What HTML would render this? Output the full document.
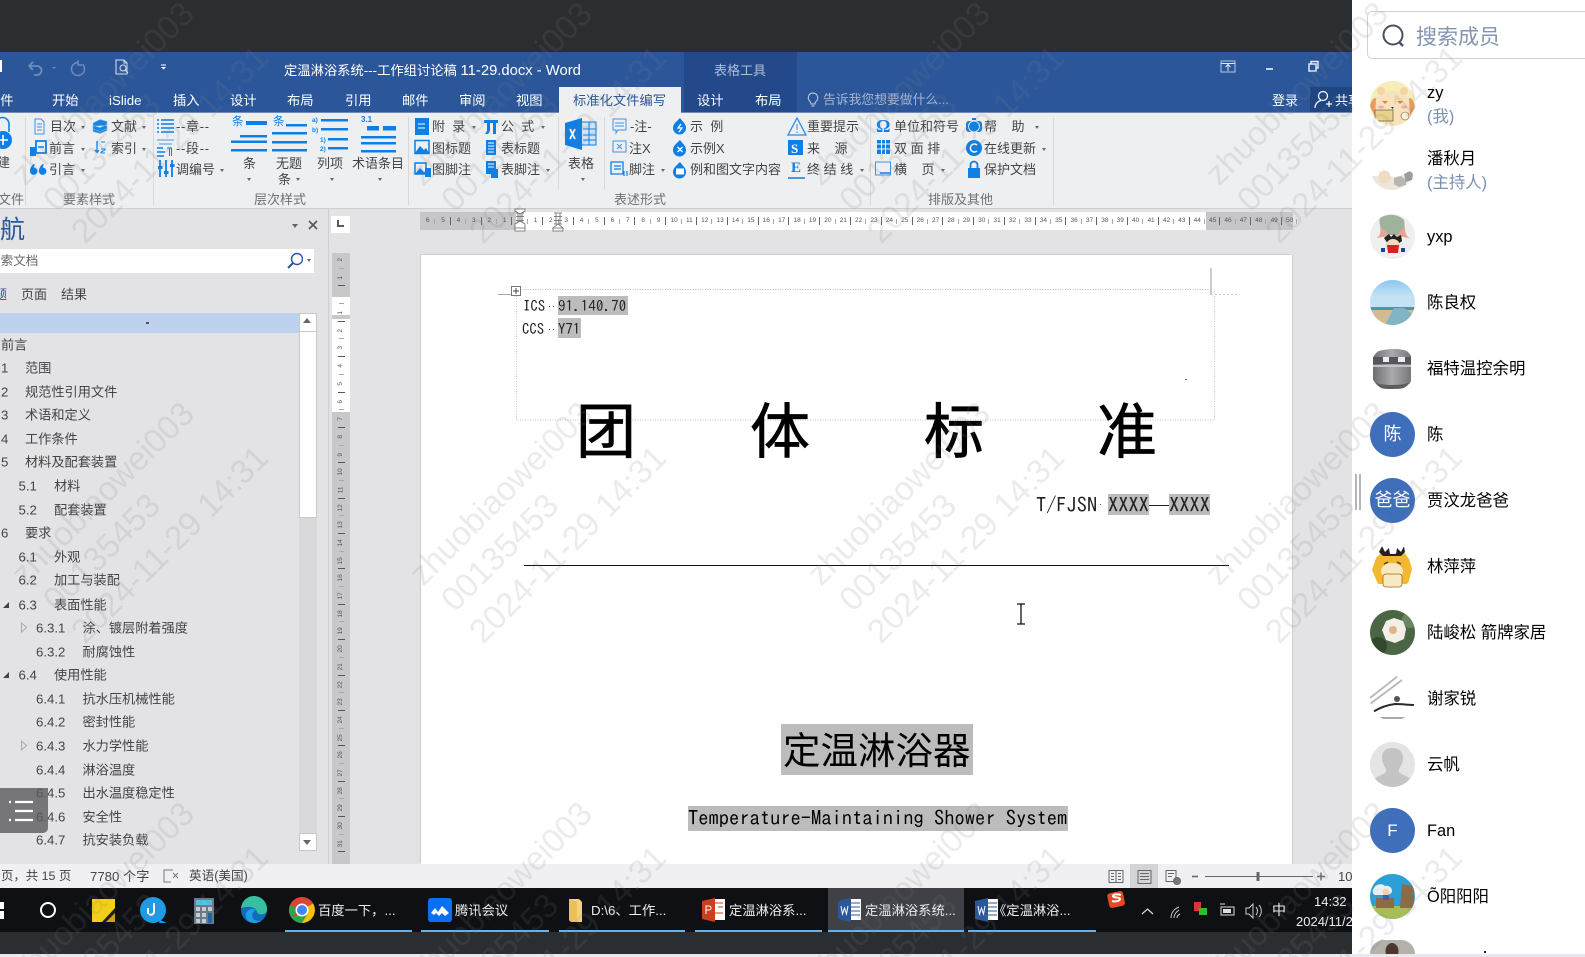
<!DOCTYPE html>
<html lang="zh"><head><meta charset="utf-8"><title>Word</title>
<style>
html,body{margin:0;padding:0;width:1585px;height:957px;overflow:hidden;background:#2b2e31}
body{position:relative;font-family:"Liberation Sans","Noto Sans CJK SC",sans-serif;font-size:13px;color:#444}
.a{position:absolute}
.t{position:absolute;white-space:nowrap;line-height:1}
.m{font-family:"IPAGothic","Liberation Mono",monospace;color:#222}
.w{color:#fff}
.r1{top:119.5px}.r2{top:141.5px}.r3{top:162.5px}
.g{top:192.5px;color:#707070}
.ar{position:absolute;width:0;height:0;border:2.5px solid transparent;border-top:3px solid #666;border-bottom:0}
.n{position:absolute;white-space:nowrap;line-height:1;color:#444;font-size:13.2px;transform:translateY(.5px)}
.sep{position:absolute;top:117px;height:88px;width:1px;background:#d8d8da}
.name{position:absolute;left:1427px;white-space:nowrap;line-height:1;font-size:16.4px;color:#000;margin-top:1px}
.sub{position:absolute;left:1427px;white-space:nowrap;line-height:1;font-size:16.4px;color:#7b8fb3;margin-top:1px}
.av{position:absolute;left:1370px;width:45px;height:45px;border-radius:50%;overflow:hidden}
.blue{background:#3f6fba;color:#fff;text-align:center;line-height:45px;font-size:18px}
.hr{display:flex;position:absolute;left:420px;top:212px;height:18px;font-size:6.5px;line-height:18px;color:#555}
.hr i{font-style:normal;display:block;width:15.4px;text-align:center;background:linear-gradient(#666,#666) right center/1px 8px no-repeat}
.hr i:nth-child(odd){background:linear-gradient(#aaa,#aaa) right center/1px 5px no-repeat}
.vr{position:absolute;left:332px;top:251px;width:18px;font-size:6.5px;color:#555}
.vr i{font-style:normal;display:block;height:17.7px;line-height:17.7px;text-align:center;background:linear-gradient(#555,#555) center bottom/7px 1px no-repeat}
.vr i:nth-child(odd){background:linear-gradient(#aaa,#aaa) center bottom/5px 1px no-repeat}
.vr b{display:inline-block;font-weight:400;transform:rotate(-90deg)}
.tab{position:absolute;top:93.5px;white-space:nowrap;line-height:1;color:#fff;font-size:13.3px}
.tk{position:absolute;top:904px;white-space:nowrap;line-height:1;color:#eee;font-size:13.3px}
.ul{position:absolute;top:930px;height:2px;background:#6cb0e8}
.big{position:absolute;white-space:nowrap;line-height:1;top:403px;font-size:60px;color:#000;font-weight:400;-webkit-text-stroke:.7px #000}
</style></head><body>

<!-- top / bottom dark -->
<div class="a" style="left:0;top:0;width:1352px;height:52px;background:#2b2e31"></div>
<div class="a" style="left:0;top:932px;width:1352px;height:22px;background:#2b2e31"></div>
<div class="a" style="left:0;top:954px;width:1585px;height:3px;background:#e8e8ee"></div>

<!-- title + tabs -->
<div class="a" style="left:0;top:52px;width:1352px;height:61px;background:#2b579a"></div>
<div class="a" style="left:684px;top:52px;width:113px;height:61px;background:#24498a"></div>
<div class="a" style="left:1310px;top:87px;width:42px;height:26px;background:#1f4681"></div>
<div class="a" style="left:0;top:112px;width:1352px;height:1px;background:#6d8cba"></div>

<svg class="a" style="left:0;top:52px" width="200" height="34" viewBox="0 52 200 34" fill="none">
<rect x="0" y="60" width="2" height="12" fill="#fff"/>
<path d="M29 66h8a4.500 4.500 0 0 1 0 9h-3M29 66l4-4M29 66l4 4" stroke="#6f8cba" stroke-width="1.800"/>
<path d="M52 67l2 2 2-2z" fill="#6f8cba"/>
<path d="M78 62.500a6.500 6.500 0 1 0 4.500 1.800M78 60v5h4" stroke="#6f8cba" stroke-width="1.500"/>
<path d="M116 60h8l3 3v11h-11zM124 60v3h3" stroke="#d9e2f0" stroke-width="1"/><circle cx="123" cy="68" r="3" stroke="#d9e2f0"/><path d="M125 70l3 3" stroke="#d9e2f0"/>
<path d="M161 67h5l-2.500 2.500z" fill="#fff"/><path d="M161 65h5" stroke="#fff"/>
</svg>

<div class="t w" style="left:284px;top:63.500px;font-size:13.3px">定温淋浴系统---工作组讨论稿 <span style="font-size:14.800px">11-29.docx - Word</span></div>
<div class="t" style="left:714px;top:63.500px;font-size:13px;color:#aebdd8">表格工具</div>

<div class="tab" style="left:-13px">文件</div>
<div class="tab" style="left:52px">开始</div>
<div class="tab" style="left:109px">iSlide</div>
<div class="tab" style="left:173px">插入</div>
<div class="tab" style="left:230px">设计</div>
<div class="tab" style="left:287px">布局</div>
<div class="tab" style="left:345px">引用</div>
<div class="tab" style="left:402px">邮件</div>
<div class="tab" style="left:459px">审阅</div>
<div class="tab" style="left:516px">视图</div>
<div class="a" style="left:559px;top:87px;width:122px;height:27px;background:#eeeff1"></div>
<div class="tab" style="left:573px;color:#2b579a">标准化文件编写</div>
<div class="tab" style="left:697px">设计</div>
<div class="tab" style="left:755px">布局</div>
<svg class="a" style="left:806px;top:92px" width="14" height="16" viewBox="0 0 14 16" fill="none" stroke="#c4d0e4"><path d="M7 1a4.800 4.800 0 0 0-3 8.500c.7.700 1 1.500 1 2.500h4c0-1 .3-1.800 1-2.500A4.800 4.800 0 0 0 7 1zM5.500 14h3"/></svg>
<div class="t" style="left:823px;top:94px;font-size:12.800px;color:#a4b5d2">告诉我您想要做什么...</div>
<div class="t w" style="left:1272px;top:94px;font-size:13px">登录</div>
<svg class="a" style="left:1314px;top:90px" width="20" height="20" viewBox="0 0 20 20" fill="none" stroke="#fff" stroke-width="1.200"><circle cx="9" cy="6" r="4.500"/><path d="M1 18c0-4 3-7 6-7.500M12 14h6M15 11v6"/></svg>
<div class="t w" style="left:1335px;top:93.500px;font-size:13px;width:17px;overflow:hidden">共享</div>

<svg class="a" style="left:1215px;top:58px" width="110" height="18" viewBox="0 0 110 18" fill="none" stroke="#e4eaf4">
<rect x="6" y="3" width="14" height="11" stroke="#b7c5dd"/><path d="M6 5.500h14M13 13V7M10.500 9L13 6.500 15.500 9"/>
<path d="M51 11h7" stroke="#fff" stroke-width="1.500"/>
<rect x="94" y="6" width="7" height="7" stroke-width="1.500"/><path d="M96 6V3.500h7V10h-2" stroke-width="1.500"/>
</svg>

<!-- ribbon -->
<div class="a" style="left:0;top:113px;width:1352px;height:95px;background:#eeeff1"></div>
<div class="a" style="left:0;top:208px;width:1352px;height:1px;background:#cfcfd2"></div>
<div class="sep" style="left:25px"></div><div class="sep" style="left:153px"></div>
<div class="sep" style="left:408px"></div><div class="sep" style="left:558px;height:72px"></div><div class="sep" style="left:604px;height:72px"></div>
<div class="sep" style="left:870px"></div><div class="sep" style="left:1053px"></div>

<svg class="a" style="left:0;top:113px" width="1352" height="95" viewBox="0 113 1352 95" fill="none" stroke="#0d7fe6" stroke-width="1">
<!-- new doc -->
<path d="M-4 132v-8a6 6 0 0 1 13 0v8" stroke-width="1.600"/><circle cx="3" cy="140" r="9" fill="#0d7fe6" stroke="none"/><path d="M3 135v10M-2 140H8" stroke="#fff" stroke-width="1.600"/>
<!-- 目次 -->
<path d="M35 119h6l3 3v12H35zM37 124h5M37 127h5M37 130h5" stroke="#3b96e6"/>
<!-- 文献 -->
<path d="M93 123l7-3.500 7 2v3l-7 3-7-2zM93 126v3l7 2.500 7-3v-3M93 129v2.500l7 2 7-3v-2.500" fill="#1c86dd" stroke="#7fb9ea" stroke-width=".6"/>
<!-- 前言 -->
<path d="M36 141h10v12H36z" stroke-width="1.800"/><rect x="30" y="147" width="6" height="9" fill="#0d7fe6" stroke="none"/><path d="M38 147h6" stroke-width="1.500"/>
<!-- 索引 -->
<path d="M97 141v11M95 150l2 2.500 2-2.500" stroke-width="1.300"/><path d="M101 142h4M101 149h4v1l-4 2v1h4" stroke-width="1"/>
<!-- 引言 -->
<path d="M33.500 164c-2 2-3.500 4-3.500 7a3.700 3.700 0 1 0 3.700-3.500c.2-1 .6-2 1.300-3zM42.500 164c-2 2-3.500 4-3.500 7a3.700 3.700 0 1 0 3.700-3.500c.2-1 .6-2 1.300-3z" fill="#0d7fe6" stroke="none"/>
<!-- 章 -->
<g stroke-width="1.500"><path d="M157 120h2M161 120h13M157 124h2M161 124h13M157 128h2M161 128h13M157 132h2M161 132h13"/>
<!-- 段 -->
<path d="M157 140h17M159 144h13" stroke="#7ab6ec"/><path d="M157 148h6M157 152h8M157 156h7"/><path d="M167 148h5M169.500 148v8M171.500 148v8" stroke-width="1"/>
<!-- 调编号 -->
<path d="M160 160v17M166 160v17M172 160v17" stroke-width="1.800"/></g>
<g fill="#0d7fe6" stroke="none"><rect x="158" y="166" width="4.500" height="3"/><rect x="164" y="171" width="4.500" height="3"/><rect x="170" y="164" width="4.500" height="3"/>
<!-- 条 -->
<rect x="246" y="121" width="21" height="4"/><rect x="240" y="135" width="27" height="2.500"/><rect x="231" y="140.500" width="36" height="2.500"/><rect x="231" y="149" width="36" height="2.500"/>
<!-- 无题条 -->
<rect x="286" y="124" width="21" height="2.500"/><rect x="272" y="132" width="35" height="2.500"/><rect x="272" y="141" width="35" height="2.500"/><rect x="272" y="149" width="35" height="2.500"/>
<!-- 列项 -->
<rect x="321" y="119" width="27" height="2.500"/><rect x="321" y="128" width="27" height="2.500"/><rect x="328" y="138" width="20" height="2.500"/><rect x="328" y="147" width="20" height="2.500"/>
<!-- 术语 -->
<rect x="367" y="126" width="12" height="4.500"/><rect x="383" y="126" width="13" height="4.500"/><rect x="361" y="136" width="35" height="2.500"/><rect x="361" y="142" width="35" height="2.500"/><rect x="361" y="150" width="35" height="2.500"/>
<!-- 附录 -->
<rect x="415" y="118" width="14" height="17"/>
<!-- pi -->
<path d="M484 120h14v3h-2v11h-3v-11h-3v8l-2 3h-3l2-3v-8h-3z"/>
<!-- 表标题 -->
<rect x="486" y="140" width="10" height="15"/>
<rect x="486" y="161" width="10" height="13"/><rect x="491" y="169" width="7" height="9"/>
</g>
<path d="M418 124h7M418 128h7M488 143h6M488 146h6M488 149h6M488 152h6M488 164h6M488 167h6" stroke="#fff" stroke-width="1"/>
<!-- 图标题 -->
<rect x="415" y="140.500" width="14" height="13" stroke-width="1.500"/><path d="M415 153l5-7 4 4 2-2 3 5z" fill="#0d7fe6" stroke="none"/>
<rect x="415" y="163" width="11" height="11" stroke-width="1.500"/><path d="M415 174l5-6 4 4 2-1v3z" fill="#0d7fe6" stroke="none"/><rect x="425" y="168" width="6" height="9" fill="#0d7fe6" stroke="none"/>
<!-- Excel -->
<rect x="575" y="122" width="21" height="23" stroke="#0d7fe6" fill="#cfe4f7"/><path d="M583 129h13M583 135h13M583 140h13M589 122v23" stroke="#0d7fe6"/>
<path d="M565 123l17-5v32l-17-5z" fill="#0d7fe6" stroke="none"/><path d="M570 129l5 10M575 129l-5 10" stroke="#fff" stroke-width="1.800"/>
<!-- 注 -->
<path d="M613 119h13v11h-8l-2 3v-3h-3zM615 123h9M615 126h9" stroke="#3b96e6"/>
<rect x="613" y="141" width="13" height="11" stroke="#3b96e6"/><path d="M617 144l5 5M622 144l-5 5" stroke="#3b96e6"/>
<path d="M611 162h12v12h-12zM614 166h7M614 169h7" stroke-width="1.300"/><path d="M624 171v5M627 171v5" stroke-width="1.200"/>
<!-- 示例 -->
<path d="M680 118c3 4 6 6 6 10a6.500 6.500 0 0 1-13 0c0-4 3-6 7-10z" fill="#0d7fe6" stroke="none"/>
<path d="M680 140c3 4 6 6 6 10a6.500 6.500 0 0 1-13 0c0-4 3-6 7-10z" fill="#0d7fe6" stroke="none"/>
<path d="M680 162c3 4 6 6 6 10a6.500 6.500 0 0 1-13 0c0-4 3-6 7-10z" fill="#0d7fe6" stroke="none"/>
<path d="M681 124l-3 4h4l-3 4M677.500 147l5 5M682.500 147l-5 5" stroke="#fff" stroke-width="1.300"/><rect x="676" y="168.500" width="8" height="6" fill="#fff" stroke="none"/>
<!-- 重要提示 -->
<path d="M797 118l9 17h-18z" stroke="#2d8be0" stroke-width="1.300"/><path d="M797 124v6M797 131.500v1.500" stroke="#2d8be0"/>
<rect x="788" y="140" width="15" height="15" fill="#0d7fe6" stroke="none"/>
<path d="M788 178h17" stroke-width="1.600"/>
<!-- 单位 -->
<rect x="877" y="140" width="13" height="14" fill="#0d7fe6" stroke="none"/><path d="M881.500 140v14M885.500 140v14M877 144h13M877 149h13" stroke="#fff"/>
<rect x="875.500" y="162" width="15" height="13" stroke="#3b96e6"/><path d="M880 173h10" stroke-width="1.500"/>
<!-- help -->
<rect x="966" y="121" width="16" height="11" rx="3" fill="#0d7fe6" stroke="none"/><circle cx="974" cy="126.500" r="5.500" fill="#0d7fe6" stroke="#eeeff1"/><path d="M972 119h4" stroke-width="2"/>
<circle cx="974" cy="148" r="8" fill="#0d7fe6" stroke="none"/><path d="M977 145a4 4 0 1 0 0 6" stroke="#fff" stroke-width="1.400"/>
<rect x="968" y="168" width="12" height="10" fill="#0d7fe6" stroke="none"/><path d="M970.500 168v-3a3.500 3.500 0 0 1 7 0v3" stroke-width="1.800"/>
</svg>

<div class="t r3" style="left:-3px;top:156px">建</div>
<div class="t r1" style="left:50px">目次</div><div class="ar" style="left:81px;top:126px"></div>
<div class="t r1" style="left:111px">文献</div><div class="ar" style="left:142px;top:126px"></div>
<div class="t r2" style="left:49px">前言</div><div class="ar" style="left:81px;top:148px"></div>
<div class="t r2" style="left:111px">索引</div><div class="ar" style="left:142px;top:148px"></div>
<div class="t r3" style="left:49px">引言</div><div class="ar" style="left:81px;top:169px"></div>
<div class="t g" style="left:-2px">文件</div><div class="t g" style="left:63px">要素样式</div>

<div class="t r1" style="left:176px;letter-spacing:.7px">--章--</div>
<div class="t r2" style="left:176px;letter-spacing:.7px">--段--</div>
<div class="t r3" style="left:176px">调编号</div><div class="ar" style="left:220px;top:169px"></div>
<div class="t" style="left:232px;top:117px;font-size:11.500px;color:#0d7fe6">条</div>
<div class="t" style="left:273px;top:117px;font-size:11.500px;color:#0d7fe6">条</div>
<div class="t" style="left:312px;top:116px;font-size:6.500px;color:#0d7fe6;line-height:9.500px;white-space:pre;font-weight:700">a)
b)</div>
<div class="t" style="left:320px;top:135.500px;font-size:6.500px;color:#0d7fe6;line-height:9.500px;white-space:pre;font-weight:700">1)
2)</div>
<div class="t" style="left:361px;top:116px;font-size:8px;color:#0d7fe6;font-weight:700">3.1</div>
<div class="t" style="left:243px;top:156.500px">条</div><div class="ar" style="left:247px;top:178px"></div>
<div class="t" style="left:276px;top:156.500px">无题</div><div class="t" style="left:278px;top:173px">条</div><div class="ar" style="left:296px;top:178px"></div>
<div class="t" style="left:317px;top:156.500px">列项</div><div class="ar" style="left:330px;top:178px"></div>
<div class="t" style="left:352px;top:156.500px">术语条目</div><div class="ar" style="left:378px;top:178px"></div>
<div class="t g" style="left:254px">层次样式</div>

<div class="t r1" style="left:432px">附 &nbsp;录</div><div class="ar" style="left:472px;top:126px"></div>
<div class="t r1" style="left:501px">公 &nbsp;式</div><div class="ar" style="left:541px;top:126px"></div>
<div class="t r2" style="left:432px">图标题</div>
<div class="t r2" style="left:501px">表标题</div>
<div class="t r3" style="left:432px">图脚注</div>
<div class="t r3" style="left:501px">表脚注</div><div class="ar" style="left:546px;top:169px"></div>
<div class="t" style="left:568px;top:156.500px">表格</div><div class="ar" style="left:581px;top:178px"></div>

<div class="t r1" style="left:630px">-注-</div>
<div class="t r2" style="left:629px">注X</div>
<div class="t r3" style="left:629px">脚注</div><div class="ar" style="left:661px;top:169px"></div>
<div class="t r1" style="left:690px">示 &nbsp;例</div>
<div class="t r2" style="left:690px">示例X</div>
<div class="t r3" style="left:690px">例和图文字内容</div>
<div class="t r1" style="left:807px">重要提示</div>
<div class="t r2" style="left:807px">来 &nbsp; &nbsp;源</div>
<div class="t r3" style="left:807px">终 结 线</div><div class="ar" style="left:860px;top:169px"></div>
<div class="t" style="left:791px;top:142px;font-size:13px;color:#fff;font-weight:700;font-family:'Liberation Serif',serif">S</div>
<div class="t" style="left:791px;top:161px;font-size:15px;color:#0d7fe6;font-weight:700;font-family:'Liberation Serif',serif">E</div>
<div class="t" style="left:876px;top:117px;font-size:18px;color:#0d7fe6;font-weight:700;font-family:'Liberation Serif',serif">Ω</div>
<div class="t r1" style="left:894px">单位和符号</div>
<div class="t r2" style="left:894px">双 面 排</div>
<div class="t r3" style="left:894px">横 &nbsp; &nbsp;页</div><div class="ar" style="left:941px;top:169px"></div>
<div class="t r1" style="left:984px">帮 &nbsp; &nbsp;助</div><div class="ar" style="left:1035px;top:126px"></div>
<div class="t r2" style="left:984px">在线更新</div><div class="ar" style="left:1042px;top:148px"></div>
<div class="t r3" style="left:984px">保护文档</div>
<div class="t g" style="left:614px">表述形式</div><div class="t g" style="left:928px">排版及其他</div>

<!-- nav pane -->
<div class="a" style="left:0;top:209px;width:1352px;height:655px;background:#e3e3e5"></div>
<div class="a" style="left:328px;top:209px;width:1px;height:655px;background:#cfcfd2"></div>
<div class="t" style="left:-25px;top:218px;font-size:25px;color:#2b579a">导航</div>
<div class="ar" style="left:292px;top:224px;border-width:3.500px;border-top-width:4px;border-bottom:0"></div>
<svg class="a" style="left:308px;top:220px" width="10" height="10" viewBox="0 0 10 10" stroke="#555" stroke-width="1.600"><path d="M1 1l8 8M9 1l-8 8"/></svg>
<div class="a" style="left:0;top:249px;width:314px;height:24px;background:#fff"></div>
<div class="t" style="left:-12px;top:255px;font-size:12.600px;color:#666">搜索文档</div>
<svg class="a" style="left:287px;top:252px" width="16" height="18" viewBox="0 0 16 18" fill="none" stroke="#2b579a" stroke-width="1.400"><circle cx="10" cy="7" r="5.500"/><path d="M6 11l-5 5" stroke-width="2"/></svg>
<div class="ar" style="left:307px;top:259px"></div>
<div class="t" style="left:-6px;top:288px;font-size:13px;color:#2b579a">题</div>
<div class="t" style="left:21px;top:288px;font-size:13px">页面</div>
<div class="t" style="left:61px;top:288px;font-size:13px">结果</div>
<div class="a" style="left:0;top:313px;width:299px;height:20px;background:#bed1ee"></div>
<div class="a" style="left:146px;top:322px;width:3px;height:2px;background:#555"></div>
<!-- scrollbar -->
<div class="a" style="left:299px;top:313px;width:18px;height:537px;background:#d9d9db"></div>
<div class="a" style="left:299px;top:313px;width:16px;height:203px;background:#fff;border:1px solid #c8c8ca"></div>
<div class="a" style="left:299px;top:331px;width:18px;height:1px;background:#c8c8ca"></div>
<div class="a" style="left:303px;top:318px;border:4.500px solid transparent;border-bottom:5px solid #666;border-top:0"></div>
<div class="a" style="left:299px;top:833px;width:16px;height:16px;background:#fff;border:1px solid #c8c8ca"></div>
<div class="a" style="left:303px;top:840px;border:4.500px solid transparent;border-top:5px solid #666;border-bottom:0"></div>

<div class="n" style="left:1px;top:337.500px">前言</div>
<div class="n" style="left:1px;top:361px">1</div><div class="n" style="left:25px;top:361px">范围</div>
<div class="n" style="left:1px;top:384.500px">2</div><div class="n" style="left:25px;top:384.500px">规范性引用文件</div>
<div class="n" style="left:1px;top:408px">3</div><div class="n" style="left:25px;top:408px">术语和定义</div>
<div class="n" style="left:1px;top:431.700px">4</div><div class="n" style="left:25px;top:431.700px">工作条件</div>
<div class="n" style="left:1px;top:455.300px">5</div><div class="n" style="left:25px;top:455.300px">材料及配套装置</div>
<div class="n" style="left:18.500px;top:479px">5.1</div><div class="n" style="left:54px;top:479px">材料</div>
<div class="n" style="left:18.500px;top:502.500px">5.2</div><div class="n" style="left:54px;top:502.500px">配套装置</div>
<div class="n" style="left:1px;top:526px">6</div><div class="n" style="left:25px;top:526px">要求</div>
<div class="n" style="left:18.500px;top:549.700px">6.1</div><div class="n" style="left:54px;top:549.700px">外观</div>
<div class="n" style="left:18.500px;top:573.300px">6.2</div><div class="n" style="left:54px;top:573.300px">加工与装配</div>
<div class="n" style="left:18.500px;top:597.500px">6.3</div><div class="n" style="left:54px;top:597.500px">表面性能</div>
<div class="n" style="left:36px;top:621px">6.3.1</div><div class="n" style="left:82.500px;top:621px">涂、镀层附着强度</div>
<div class="n" style="left:36px;top:644.500px">6.3.2</div><div class="n" style="left:82.500px;top:644.500px">耐腐蚀性</div>
<div class="n" style="left:18.500px;top:668px">6.4</div><div class="n" style="left:54px;top:668px">使用性能</div>
<div class="n" style="left:36px;top:691.800px">6.4.1</div><div class="n" style="left:82.500px;top:691.800px">抗水压机械性能</div>
<div class="n" style="left:36px;top:715.400px">6.4.2</div><div class="n" style="left:82.500px;top:715.400px">密封性能</div>
<div class="n" style="left:36px;top:739px">6.4.3</div><div class="n" style="left:82.500px;top:739px">水力学性能</div>
<div class="n" style="left:36px;top:762.600px">6.4.4</div><div class="n" style="left:82.500px;top:762.600px">淋浴温度</div>
<div class="n" style="left:36px;top:786.200px">6.4.5</div><div class="n" style="left:82.500px;top:786.200px">出水温度稳定性</div>
<div class="n" style="left:36px;top:809.800px">6.4.6</div><div class="n" style="left:82.500px;top:809.800px">安全性</div>
<div class="n" style="left:36px;top:833.400px">6.4.7</div><div class="n" style="left:82.500px;top:833.400px">抗安装负载</div>
<svg class="a" style="left:0;top:590px" width="32" height="190" viewBox="0 590 32 190"><path d="M3 608l6-6v6z" fill="#444"/><path d="M3 678l6-6v6z" fill="#444"/><path d="M21.500 623v9l5-4.500zM21.500 741v9l5-4.500z" fill="none" stroke="#aaa"/></svg>
<svg class="a" style="left:0;top:788px" width="48" height="45" viewBox="0 0 48 45"><path d="M0 0h48v40a5 5 0 0 1-5 5H0z" fill="#5a5a5c" fill-opacity=".8"/><path d="M9 14h2M15 14h18M15 23h18M9 32h2M15 32h18" stroke="#fff" stroke-width="2.200"/></svg>

<!-- rulers -->
<div class="a" style="left:331px;top:216px;width:19px;height:17px;background:#fff"></div>
<svg class="a" style="left:337px;top:220px" width="8" height="8"><path d="M1 0v6h6" fill="none" stroke="#444" stroke-width="1.800"/></svg>
<div class="a" style="left:420px;top:212px;width:96px;height:18px;background:#c6c6c8"></div>
<div class="a" style="left:516px;top:212px;width:690px;height:18px;background:#fff"></div>
<div class="a" style="left:1206px;top:212px;width:87px;height:18px;background:#c6c6c8"></div>
<div class="hr"><i>6</i><i>5</i><i>4</i><i>3</i><i>2</i><i>1</i><i></i><i>1</i><i>2</i><i>3</i><i>4</i><i>5</i><i>6</i><i>7</i><i>8</i><i>9</i><i>10</i><i>11</i><i>12</i><i>13</i><i>14</i><i>15</i><i>16</i><i>17</i><i>18</i><i>19</i><i>20</i><i>21</i><i>22</i><i>23</i><i>24</i><i>25</i><i>26</i><i>27</i><i>28</i><i>29</i><i>30</i><i>31</i><i>32</i><i>33</i><i>34</i><i>35</i><i>36</i><i>37</i><i>38</i><i>39</i><i>40</i><i>41</i><i>42</i><i>43</i><i>44</i><i>45</i><i>46</i><i>47</i><i>48</i><i>49</i><i>50</i></div>
<svg class="a" style="left:512px;top:208px" width="60" height="28" viewBox="0 0 60 28" fill="none" stroke="#666" stroke-width=".8"><path d="M4 5h8M4 16h8M8 5v11M4 8.500h8M4 12.500h8M6 5v11M10 5v11"/><path d="M3 1h10v2l-5 3-5-3zM3 20h10v3H3zM3 16l5-3 5 3v4H3z" fill="#fff"/><path d="M42 5h8M42 16h8M44 5v11M48 5v11M42 8.500h8M42 12.500h8"/><path d="M41 20h10v3H41zM41 20l5-4 5 4z" fill="#fff"/></svg>

<div class="a" style="left:332px;top:253px;width:18px;height:611px;background:#c8c8ca"></div>
<div class="a" style="left:332px;top:297px;width:18px;height:115px;background:#fff"></div>
<div class="a" style="left:332px;top:315px;width:18px;height:4px;background:#c8c8ca"></div>
<div class="vr"><i><b>2</b></i><i><b>1</b></i><i></i><i><b>1</b></i><i><b>2</b></i><i><b>3</b></i><i><b>4</b></i><i><b>5</b></i><i><b>6</b></i><i><b>7</b></i><i><b>8</b></i><i><b>9</b></i><i><b>10</b></i><i><b>11</b></i><i><b>12</b></i><i><b>13</b></i><i><b>14</b></i><i><b>15</b></i><i><b>16</b></i><i><b>17</b></i><i><b>18</b></i><i><b>19</b></i><i><b>20</b></i><i><b>21</b></i><i><b>22</b></i><i><b>23</b></i><i><b>24</b></i><i><b>25</b></i><i><b>26</b></i><i><b>27</b></i><i><b>28</b></i><i><b>29</b></i><i><b>30</b></i><i><b>31</b></i></div>

<!-- page -->
<div class="a" style="left:421px;top:255px;width:871px;height:609px;background:#fff;box-shadow:-1px -1px 0 #cdcdd0,1px 0 0 #cdcdd0"></div>
<svg class="a" style="left:495px;top:265px" width="750" height="160" viewBox="495 265 750 160" fill="none">
<path d="M511 294.500h8" stroke="#bbb"/><path d="M498 294.500h13" stroke="#aaa"/>
<path d="M1211 268v27" stroke="#999"/>
<path d="M520 289.500h691" stroke="#bbb" stroke-dasharray="1 1.500"/>
<path d="M1211 294.500h26" stroke="#ccc" stroke-dasharray="2 2"/>
<path d="M516.500 296v124h698V289" stroke="#c4c4c4" stroke-dasharray="1 1.500"/>
<rect x="511.500" y="286.500" width="9" height="9" fill="#fff" stroke="#777"/><path d="M513 291h6M516 288v6" stroke="#444"/>
<path d="M1185 379.500h2" stroke="#666"/>
</svg>
<div class="a" style="left:558px;top:296px;width:70px;height:19px;background:#bcbcbc"></div>
<div class="a" style="left:558px;top:318px;width:23px;height:20px;background:#bcbcbc"></div>
<div class="t m" style="left:523px;top:299px;font-size:14.800px">ICS</div>
<div class="a" style="left:549px;top:306px;width:1px;height:1px;background:#555"></div><div class="a" style="left:553px;top:306px;width:1px;height:1px;background:#555"></div>
<div class="t m" style="left:558px;top:299px;font-size:14.800px;letter-spacing:.2px">91.140.70</div>
<div class="t m" style="left:522px;top:322px;font-size:14.800px">CCS</div>
<div class="a" style="left:549px;top:329px;width:1px;height:1px;background:#555"></div><div class="a" style="left:553px;top:329px;width:1px;height:1px;background:#555"></div>
<div class="t m" style="left:558px;top:322px;font-size:14.800px">Y71</div>

<div class="big" style="left:576px">团</div>
<div class="big" style="left:750px">体</div>
<div class="big" style="left:924px">标</div>
<div class="big" style="left:1097px">准</div>

<div class="a" style="left:1108px;top:494px;width:41px;height:21px;background:#bcbcbc"></div>
<div class="a" style="left:1169px;top:494px;width:41px;height:21px;background:#bcbcbc"></div>
<div class="t m" style="left:1036px;top:494.500px;font-size:20.400px">T/FJSN</div>
<div class="a" style="left:1100px;top:504px;width:1px;height:1px;background:#555"></div>
<div class="t m" style="left:1108px;top:494.500px;font-size:20.400px">XXXX</div>
<div class="a" style="left:1149px;top:505px;width:20px;height:1px;background:#222"></div>
<div class="t m" style="left:1169px;top:494.500px;font-size:20.400px">XXXX</div>
<div class="a" style="left:524px;top:565px;width:705px;height:1px;background:#111"></div>
<svg class="a" style="left:1016px;top:603px" width="10" height="22" fill="none" stroke="#111" stroke-width="1.300"><path d="M1 1h8M5 1v20M1 21h8"/></svg>

<div class="a" style="left:781px;top:724px;width:192px;height:51px;background:#bcbcbc"></div>
<div class="t" style="left:783px;top:733px;font-size:37.500px;color:#000">定温淋浴器</div>
<div class="a" style="left:688px;top:806px;width:380px;height:25px;background:#bcbcbc"></div>
<div class="t m" style="left:688px;top:808px;font-size:20.500px;width:380px;color:#000">Temperature-Maintaining Shower System</div>

<!-- status -->
<div class="a" style="left:0;top:864px;width:1352px;height:24px;background:#f0f0f2"></div>
<div class="t" style="left:1px;top:870px;font-size:12.400px">页，共 15 页</div>
<div class="t" style="left:90px;top:870px;font-size:13.200px">7780 个字</div>
<svg class="a" style="left:162px;top:869px" width="18" height="14" fill="none" stroke="#777"><path d="M9 1H2v12h7M9 1h2M11 4l5 5M16 4l-5 5"/></svg>
<div class="t" style="left:189px;top:870px;font-size:12.600px">英语(美国)</div>
<svg class="a" style="left:1100px;top:864px" width="252" height="24" viewBox="1100 864 252 24" fill="none" stroke="#666">
<rect x="1130" y="864" width="28" height="24" fill="#d4d4d6" stroke="none"/>
<path d="M1109 870.500h14v12h-14zM1116 870.500v12M1111 873.500h3M1111 876.500h3M1111 879.500h3M1118 873.500h3M1118 876.500h3M1118 879.500h3"/>
<path d="M1138 870.500h13v13h-13zM1140 873.500h9M1140 876.500h9M1140 879.500h9"/>
<path d="M1166 870.500h10v11h-10zM1168 873.500h6M1168 876.500h4"/><circle cx="1177" cy="881" r="3.500" fill="#777"/>
<path d="M1192 876.500h6" stroke-width="1.600"/><path d="M1205 876.500h108"/><path d="M1258 872v9" stroke-width="3"/><path d="M1317 876.500h8M1321 872.500v8" stroke-width="1.400"/>
</svg>
<div class="t" style="left:1338px;top:870px;font-size:13px">10</div>

<!-- taskbar -->
<div class="a" style="left:0;top:888px;width:1352px;height:44px;background:#0e1014"></div>
<div class="a" style="left:828px;top:888px;width:136px;height:44px;background:#3f4146"></div>
<div class="ul" style="left:285px;width:127px"></div><div class="ul" style="left:421px;width:128px"></div><div class="ul" style="left:559px;width:126px"></div><div class="ul" style="left:695px;width:127px"></div><div class="ul" style="left:828px;width:136px"></div><div class="ul" style="left:968px;width:128px"></div>
<svg class="a" style="left:0;top:888px" width="1352" height="44" viewBox="0 888 1352 44" fill="none">
<path d="M0 902h4v7H0zM0 911h4v8H0z" fill="#fff"/>
<circle cx="48" cy="910" r="7" stroke="#fff" stroke-width="2"/>
<rect x="92" y="899" width="23" height="23" fill="#f3cf16"/><path d="M115 908v14h-13z" fill="#1f1f1f"/><path d="M115 913v9h-9z" fill="#d0a21c"/>
<circle cx="153" cy="910" r="13" fill="#1c9be6"/><path d="M160 920l7 3-8 0z" fill="#1c9be6"/><path d="M148 908v6M154 903v9a3 3 0 0 1-5 2" stroke="#fff" stroke-width="2"/>
<rect x="194" y="898" width="20" height="26" fill="#6b7a88"/><rect x="196" y="900" width="16" height="5" fill="#4fc3e8"/><g fill="#c4cdd4"><rect x="196" y="907" width="4" height="4"/><rect x="202" y="907" width="4" height="4"/><rect x="208" y="907" width="4" height="4"/><rect x="196" y="913" width="4" height="4"/><rect x="202" y="913" width="4" height="4"/><rect x="196" y="919" width="4" height="4"/><rect x="202" y="919" width="4" height="4"/></g><rect x="208" y="913" width="4" height="10" fill="#2463a8"/>
<circle cx="254" cy="910" r="13" fill="#0f6cbd"/><path d="M241 908a13 13 0 0 1 26 2c0 4-5 5-8 4-3-1-1-4-5-6-5-2-9-1-13 0z" fill="#35c1a0"/><path d="M254 923c-6 0-9-5-8-10 2-4 7-5 10-3-3 1-5 5-3 8 1 3 6 4 9 2-2 2-5 3-8 3z" fill="#1fa0e3"/>
<circle cx="302" cy="910" r="13" fill="#db4437"/><path d="M302 910l-11.300 6.500A13 13 0 0 1 290 905z" fill="#30a24c"/><path d="M302 910l11-6.500A13 13 0 0 1 302 923l-6-6z" fill="#f4c20d"/><path d="M290.700 916.500A13 13 0 0 0 302 923l5-8z" fill="#30a24c"/><circle cx="302" cy="910" r="6.500" fill="#fff"/><circle cx="302" cy="910" r="5" fill="#4285f4"/>
<rect x="428" y="898" width="24" height="24" rx="3" fill="#0a6ff0"/><path d="M431 913l4-5 3 4 4-6 7 7-4 3-3-3-3 3-3-3-2 2z" fill="#fff"/>
<path d="M569 899h10l3 3v20h-11l-2-2z" fill="#f3d37a"/><path d="M569 899l8 3v20h-6l-2-2z" fill="#e8c05e"/>
<rect x="711" y="899" width="14" height="21" fill="#fff"/><path d="M702 901l13-3v24l-13-3z" fill="#c9401f"/><path d="M715 903h8M718 907h5M715 913h8" stroke="#c9401f"/><path d="M706 914v-8h3a2 2 0 0 1 0 4h-3" stroke="#fff"/>
<rect x="849" y="899" width="12" height="21" fill="#fff"/><path d="M838 901l13-3v24l-13-3z" fill="#2b579a"/><path d="M851 903h9M851 907h9M851 911h9M851 915h9" stroke="#2b579a"/><path d="M841 906l1.500 8 2-6 2 6 1.500-8" stroke="#fff"/>
<rect x="986" y="899" width="12" height="21" fill="#fff"/><path d="M975 901l13-3v24l-13-3z" fill="#2b579a"/><path d="M988 903h9M988 907h9M988 911h9M988 915h9" stroke="#2b579a"/><path d="M978 906l1.500 8 2-6 2 6 1.500-8" stroke="#fff"/>
<rect x="1108" y="892" width="16" height="15" rx="3" transform="rotate(-12 1116 899)" fill="#e8481f"/><path d="M1121 895c-3-1-8-1-8 1s7 1 7 3-5 3-8 2" stroke="#fff" stroke-width="2"/>
<path d="M1142 914l5.500-5 5.500 5" stroke="#ddd" stroke-width="1.200"/>
<path d="M1171 918c0-5 3-9 8-11M1174 918c0-3 2-6 5-8M1177 918c0-2 1-3 3-4" stroke="#ccc"/>
<rect x="1194" y="902" width="7" height="9" fill="#d33"/><rect x="1199" y="908" width="8" height="7" fill="#3b3"/>
<rect x="1221" y="907" width="13" height="8" stroke="#ddd"/><rect x="1223" y="909" width="8" height="4" fill="#ddd"/><path d="M1220 904h5" stroke="#ddd"/>
<path d="M1246 908h3l4-4v14l-4-4h-3zM1256 907a6 6 0 0 1 0 8M1259 905a9 9 0 0 1 0 12" stroke="#ccc"/>
</svg>
<div class="tk" style="left:318px">百度一下，...</div>
<div class="tk" style="left:455px">腾讯会议</div>
<div class="tk" style="left:591px">D:\6、工作...</div>
<div class="tk" style="left:729px">定温淋浴系...</div>
<div class="tk" style="left:865px">定温淋浴系统...</div>
<div class="tk" style="left:993px">《定温淋浴...</div>
<div class="t" style="left:1272px;top:903px;font-size:14px;color:#eee">中</div>
<div class="t" style="left:1314px;top:895px;font-size:13px;color:#eee;width:38px;overflow:hidden">14:32</div>
<div class="t" style="left:1296px;top:915px;font-size:13px;color:#eee;width:56px;overflow:hidden">2024/11/29</div>

<!-- right panel -->
<div class="a" style="left:1352px;top:0;width:233px;height:954px;background:#fff"></div>
<div class="a" style="left:1367px;top:11px;width:240px;height:46px;border:1px solid #cfd2d8;border-radius:5px;background:#fff"></div>
<svg class="a" style="left:1381px;top:23px" width="26" height="26" viewBox="0 0 26 26" fill="none" stroke="#4a5160" stroke-width="2"><circle cx="12" cy="12" r="9.500"/><path d="M18.500 19.500l3.500 3.500" stroke-width="2.500"/></svg>
<div class="t" style="left:1416px;top:27px;font-size:21px;color:#8294b0">搜索成员</div>
<div class="a" style="left:1355px;top:474px;width:2px;height:36px;background:#b5b7bd"></div>
<div class="a" style="left:1359px;top:474px;width:2px;height:36px;background:#b5b7bd"></div>

<svg class="av" style="top:81px" viewBox="0 0 45 45"><rect width="45" height="45" fill="#f6edb8"/><ellipse cx="22.500" cy="27" rx="21" ry="17" fill="#f8e2bd"/><path d="M0 26c1-6 3-9 6-9l-1 18zM45 26c-1-6-3-9-6-9l1 18z" fill="#e59a5e"/><circle cx="11" cy="10" r="4" fill="#f5d4a4"/><circle cx="34" cy="10" r="4" fill="#f5d4a4"/><path d="M12 20h6l-3 3zM27 20h6l-3 3z" fill="#e88237"/><ellipse cx="11" cy="26" rx="3" ry="1.500" fill="#f5a8b4"/><ellipse cx="34" cy="26" rx="3" ry="1.500" fill="#f5a8b4"/><path d="M21 26h3l-1.500 2z" fill="#333"/><rect x="5" y="29" width="18" height="11" fill="#e9d28a" stroke="#6a5a30" stroke-width=".7"/><circle cx="35" cy="35" r="4" fill="#fff3d8" stroke="#6a5a30" stroke-width=".6"/></svg>
<svg class="av" style="top:146.500px" viewBox="0 0 45 45"><rect width="45" height="45" fill="#fff"/><path d="M2 29c6 0 15-1 22 1 7-1 14-4 19-3-3 10-12 16-21 16S5 38 2 29z" fill="#ece6dd"/><path d="M9 26l5-3 5 2 2 6-3 5-7 0-3-4z" fill="#f0dcc0"/><path d="M24 31l7-2 5 4v5l-7 2-5-3z" fill="#b8b6b2"/><path d="M34 27l6-3 3 3-1 6-6 2z" fill="#9c9c9e"/></svg>
<svg class="av" style="top:213.500px" viewBox="0 0 45 45"><rect width="45" height="45" fill="#eef0ee"/><path d="M10 4c8-5 18-4 24 2 2 8-2 12-5 15H16C12 17 8 10 10 4z" fill="#9fb39c"/><path d="M10 12c4 4 7 7 10 10l-14 2c4-2 5-5 4-12zM35 12c-3 4-6 7-9 10l14 2c-4-2-5-5-5-12z" fill="#e8a596"/><path d="M14 24l5-4 2 3 3-3 3 3 4-2 1 6-4 3H18z" fill="#222"/><ellipse cx="23" cy="32" rx="7" ry="7" fill="#f4d8c4"/><path d="M17 31h12l-1 8H18z" fill="#d82020"/><rect x="11" y="34" width="4" height="4" fill="#1d3fa8"/><rect x="31" y="34" width="4" height="4" fill="#1d3fa8"/></svg>
<svg class="av" style="top:279.500px" viewBox="0 0 45 45"><defs><linearGradient id="sk" x1="0" y1="0" x2="0" y2="1"><stop offset="0" stop-color="#8cc7ee"/><stop offset=".6" stop-color="#c4e2f3"/></linearGradient></defs><rect width="45" height="27" fill="url(#sk)"/><rect y="27" width="45" height="5" fill="#3d9dae"/><rect y="30" width="45" height="15" fill="#d2bb93"/><path d="M24 28h10l11 8v9H15z" fill="#7fb5c4"/></svg>
<svg class="av" style="top:345.500px" viewBox="0 0 45 45"><defs><linearGradient id="cy" x1="0" y1="0" x2="1" y2="0"><stop offset="0" stop-color="#6d6d72"/><stop offset=".5" stop-color="#a9a9ae"/><stop offset="1" stop-color="#77777c"/></linearGradient></defs><rect width="45" height="45" fill="#fff"/><path d="M3 8c5-5 32-8 38 0v32c-8 4-30 4-38 0z" fill="url(#cy)"/><rect x="3" y="11" width="38" height="7" fill="#55555a"/><rect x="13" y="11" width="6" height="5" fill="#eee"/><rect x="28" y="11" width="7" height="5" fill="#eee"/><rect x="3" y="19" width="38" height="2" fill="#c4c4c8"/><path d="M3 36c10 4 28 4 38 0v4c-10 4-28 4-38 0z" fill="#5d5d62"/></svg>
<div class="av blue" style="top:411.500px">陈</div>
<div class="av blue" style="top:477.500px">爸爸</div>
<svg class="av" style="top:543.500px" viewBox="0 0 45 45"><rect width="45" height="45" fill="#fff"/><path d="M6 14l6-6h6l4 3 6-3h6l5 7 3 10-4 15H8L2 26z" fill="#f3b82f"/><path d="M12 2l3 6 4-4 1 6h6l1-6 4 4 3-6 1 6-4 4H13l-4-4z" fill="#222"/><ellipse cx="22" cy="27" rx="11" ry="8" fill="#f8e8c4"/><rect x="13" y="30" width="19" height="13" rx="3" fill="#f8e8c4" stroke="#a06b10" stroke-width=".8"/><path d="M14 20l4-2M31 20l-4-2" stroke="#444" stroke-width="1.500"/></svg>
<svg class="av" style="top:609.500px" viewBox="0 0 45 45"><rect width="45" height="45" fill="#4b6645"/><circle cx="8" cy="36" r="9" fill="#33492f"/><circle cx="40" cy="10" r="8" fill="#6a8560"/><path d="M12 20l4-9 8-3 9 3 3 8-2 10-9 4-9-3z" fill="#f3efe8"/><circle cx="23" cy="20" r="4" fill="#e0b488"/></svg>
<svg class="av" style="top:675.500px" viewBox="0 0 45 45"><rect width="45" height="45" fill="#fff"/><path d="M0 22L28 0M0 28L32 4" stroke="#bbb" stroke-width="2"/><path d="M3 36c6-4 14-7 22-8 6 0 14 1 20 1" stroke="#2a2a2a" stroke-width="2" fill="none"/><circle cx="27" cy="23" r="3" fill="#555"/><path d="M8 42h28" stroke="#aaa" stroke-width="2"/></svg>
<svg class="av" style="top:741.500px" viewBox="0 0 45 45"><rect width="45" height="45" fill="#e4e4e4"/><path d="M12 16c0-8 5-10 10-10s11 2 11 10c0 5-3 9-4 11v3c3 3 9 4 13 8-5 6-12 7-20 7S7 43 3 38c4-4 10-5 13-8v-3c-1-2-4-6-4-11z" fill="#c4c4c4"/></svg>
<div class="av blue" style="top:807.500px;font-size:17px">F</div>
<svg class="av" style="top:873.500px" viewBox="0 0 45 45"><rect width="45" height="45" fill="#2e9fd6"/><path d="M4 14c2-4 8-5 11-2 3-1 7 1 7 5 0 3-4 4-7 4H6c-4 0-4-5-2-7z" fill="#e9eef2"/><rect y="32" width="45" height="13" fill="#a9bd56"/><path d="M32 10l12 2v22H30z" fill="#8c6c46"/><path d="M6 24h18v10H6z" fill="#8c6c46"/><circle cx="16" cy="18" r="3.500" fill="#f1d0b0"/><rect x="13" y="21" width="6" height="5" fill="#3f5fa6"/></svg>
<svg class="av" style="top:939.500px;height:14px;border-radius:23px 23px 0 0" viewBox="0 0 45 14" preserveAspectRatio="none"><rect width="45" height="14" fill="#b4b0ab"/><ellipse cx="22" cy="11" rx="6.500" ry="8" fill="#4b372c"/></svg>
<div class="a" style="left:1484px;top:951px;width:2px;height:2px;background:#222"></div>

<div class="name" style="top:84px">zy</div><div class="sub" style="top:108px">(我)</div>
<div class="name" style="top:150px">潘秋月</div><div class="sub" style="top:174px">(主持人)</div>
<div class="name" style="top:228px">yxp</div>
<div class="name" style="top:294px">陈良权</div>
<div class="name" style="top:360px">福特温控余明</div>
<div class="name" style="top:425.500px">陈</div>
<div class="name" style="top:491.500px">贾汶龙爸爸</div>
<div class="name" style="top:557.500px">林萍萍</div>
<div class="name" style="top:623.500px">陆峻松 箭牌家居</div>
<div class="name" style="top:689.500px">谢家锐</div>
<div class="name" style="top:755.500px">云帆</div>
<div class="name" style="top:821.500px">Fan</div>
<div class="name" style="top:887.500px">Õ阳阳阳</div>

<!-- watermark -->
<svg class="a" style="left:0;top:0" width="1585" height="957">
<defs><pattern id="wm" patternUnits="userSpaceOnUse" width="398" height="400">
<g font-family="Liberation Sans,sans-serif" font-size="33.500" fill="#77777c" fill-opacity=".15">
<text transform="translate(25 187) rotate(-45)">zhuobiaowei003</text>
<text transform="translate(57 213) rotate(-45)">00135453</text>
<text transform="translate(85 245) rotate(-45)">2024-11-29 14:31</text>
</g></pattern></defs>
<rect width="1585" height="957" fill="url(#wm)"/>
</svg>
</body></html>
